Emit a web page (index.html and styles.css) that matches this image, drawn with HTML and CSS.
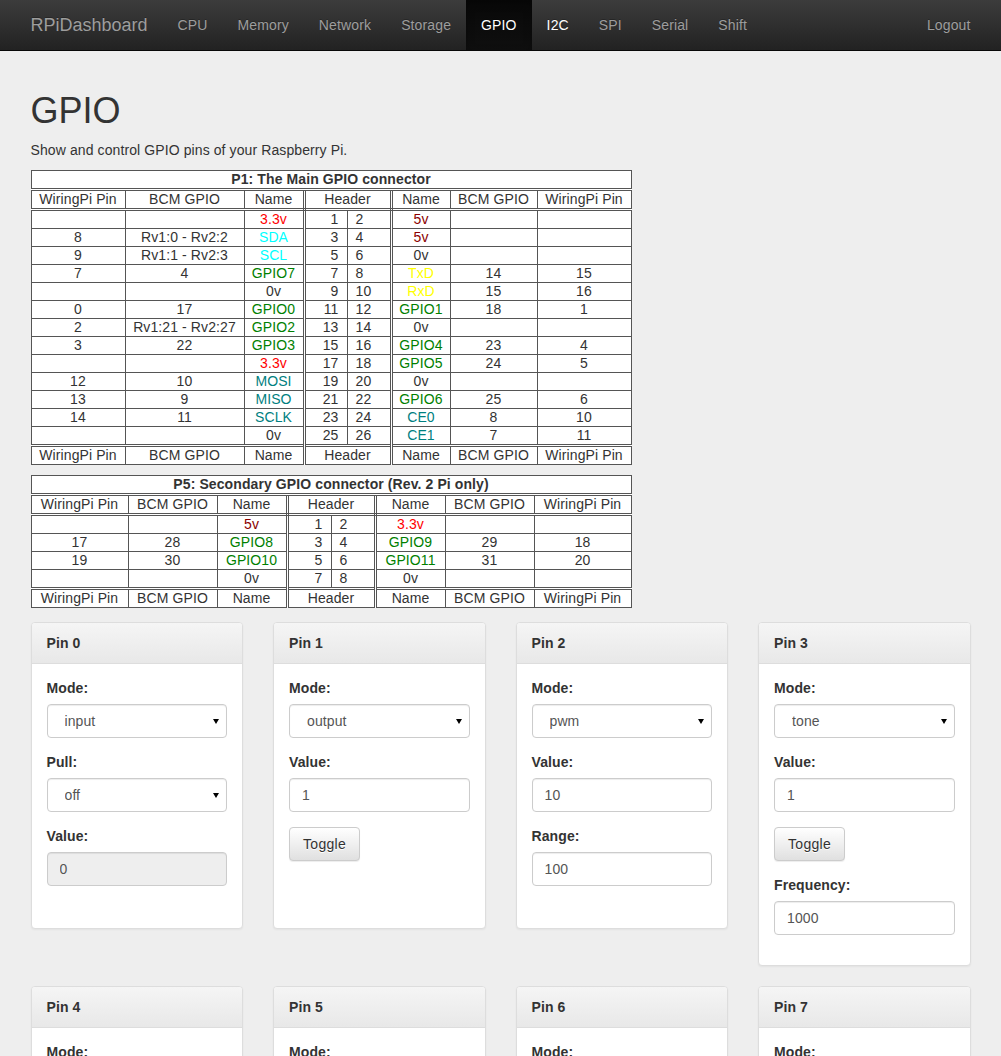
FILE: index.html
```html
<!DOCTYPE html>
<html lang="en">
<head>
<meta charset="utf-8">
<title>RPiDashboard - GPIO</title>
<link rel="stylesheet" href="styles.css">
</head>
<body>
<nav class="navbar">
  <div class="navbar-inner">
    <a class="brand" href="#">RPiDashboard</a>
    <ul class="nav">
      <li><a href="#">CPU</a></li>
      <li><a href="#">Memory</a></li>
      <li><a href="#">Network</a></li>
      <li><a href="#">Storage</a></li>
      <li class="active"><a href="#">GPIO</a></li>
      <li class="hover"><a href="#">I2C</a></li>
      <li><a href="#">SPI</a></li>
      <li><a href="#">Serial</a></li>
      <li><a href="#">Shift</a></li>
    </ul>
    <ul class="nav nav-right">
      <li><a href="#">Logout</a></li>
    </ul>
  </div>
</nav>

<main class="container">
  <h1>GPIO</h1>
  <p class="lead">Show and control GPIO pins of your Raspberry Pi.</p>

  <table class="pins p1">
    <colgroup>
      <col class="p1-a"><col class="p1-b"><col class="p1-c"><col class="p1-d"><col class="p1-e"><col class="p1-f"><col class="p1-g"><col class="p1-h">
    </colgroup>
    <tr class="title"><th colspan="8">P1: The Main GPIO connector</th></tr>
    <tr class="head-row"><th>WiringPi Pin</th><th>BCM GPIO</th><th class="dbl">Name</th><th colspan="2" class="dbl">Header</th><th>Name</th><th>BCM GPIO</th><th>WiringPi Pin</th></tr>
    <tr><td></td><td></td><td class="dbl v33">3.3v</td><td class="hl">1</td><td class="hr dbl">2</td><td class="v5">5v</td><td></td><td></td></tr>
    <tr><td>8</td><td>Rv1:0 - Rv2:2</td><td class="dbl i2c">SDA</td><td class="hl">3</td><td class="hr dbl">4</td><td class="v5">5v</td><td></td><td></td></tr>
    <tr><td>9</td><td>Rv1:1 - Rv2:3</td><td class="dbl i2c">SCL</td><td class="hl">5</td><td class="hr dbl">6</td><td>0v</td><td></td><td></td></tr>
    <tr><td>7</td><td>4</td><td class="dbl gpio">GPIO7</td><td class="hl">7</td><td class="hr dbl">8</td><td class="uart">TxD</td><td>14</td><td>15</td></tr>
    <tr><td></td><td></td><td class="dbl">0v</td><td class="hl">9</td><td class="hr dbl">10</td><td class="uart">RxD</td><td>15</td><td>16</td></tr>
    <tr><td>0</td><td>17</td><td class="dbl gpio">GPIO0</td><td class="hl">11</td><td class="hr dbl">12</td><td class="gpio">GPIO1</td><td>18</td><td>1</td></tr>
    <tr><td>2</td><td>Rv1:21 - Rv2:27</td><td class="dbl gpio">GPIO2</td><td class="hl">13</td><td class="hr dbl">14</td><td>0v</td><td></td><td></td></tr>
    <tr><td>3</td><td>22</td><td class="dbl gpio">GPIO3</td><td class="hl">15</td><td class="hr dbl">16</td><td class="gpio">GPIO4</td><td>23</td><td>4</td></tr>
    <tr><td></td><td></td><td class="dbl v33">3.3v</td><td class="hl">17</td><td class="hr dbl">18</td><td class="gpio">GPIO5</td><td>24</td><td>5</td></tr>
    <tr><td>12</td><td>10</td><td class="dbl spi">MOSI</td><td class="hl">19</td><td class="hr dbl">20</td><td>0v</td><td></td><td></td></tr>
    <tr><td>13</td><td>9</td><td class="dbl spi">MISO</td><td class="hl">21</td><td class="hr dbl">22</td><td class="gpio">GPIO6</td><td>25</td><td>6</td></tr>
    <tr><td>14</td><td>11</td><td class="dbl spi">SCLK</td><td class="hl">23</td><td class="hr dbl">24</td><td class="spi">CE0</td><td>8</td><td>10</td></tr>
    <tr><td></td><td></td><td class="dbl">0v</td><td class="hl">25</td><td class="hr dbl">26</td><td class="spi">CE1</td><td>7</td><td>11</td></tr>
    <tr class="foot-row"><th>WiringPi Pin</th><th>BCM GPIO</th><th class="dbl">Name</th><th colspan="2" class="dbl">Header</th><th>Name</th><th>BCM GPIO</th><th>WiringPi Pin</th></tr>
  </table>

  <table class="pins p5">
    <colgroup>
      <col class="p5-a"><col class="p5-b"><col class="p5-c"><col class="p5-d"><col class="p5-e"><col class="p5-f"><col class="p5-g"><col class="p5-h">
    </colgroup>
    <tr class="title"><th colspan="8">P5: Secondary GPIO connector (Rev. 2 Pi only)</th></tr>
    <tr class="head-row"><th>WiringPi Pin</th><th>BCM GPIO</th><th class="dbl">Name</th><th colspan="2" class="dbl">Header</th><th>Name</th><th>BCM GPIO</th><th>WiringPi Pin</th></tr>
    <tr><td></td><td></td><td class="dbl v5">5v</td><td class="hl">1</td><td class="hr dbl">2</td><td class="v33">3.3v</td><td></td><td></td></tr>
    <tr><td>17</td><td>28</td><td class="dbl gpio">GPIO8</td><td class="hl">3</td><td class="hr dbl">4</td><td class="gpio">GPIO9</td><td>29</td><td>18</td></tr>
    <tr><td>19</td><td>30</td><td class="dbl gpio">GPIO10</td><td class="hl">5</td><td class="hr dbl">6</td><td class="gpio">GPIO11</td><td>31</td><td>20</td></tr>
    <tr><td></td><td></td><td class="dbl">0v</td><td class="hl">7</td><td class="hr dbl">8</td><td>0v</td><td></td><td></td></tr>
    <tr class="foot-row"><th>WiringPi Pin</th><th>BCM GPIO</th><th class="dbl">Name</th><th colspan="2" class="dbl">Header</th><th>Name</th><th>BCM GPIO</th><th>WiringPi Pin</th></tr>
  </table>

  <div class="pin-grid">
    <div class="panel">
      <div class="panel-heading"><h3 class="panel-title">Pin 0</h3></div>
      <div class="panel-body">
        <div class="form-group"><label>Mode:</label><div class="select-wrap"><select class="form-control"><option>input</option><option>output</option><option>pwm</option><option>tone</option></select></div></div>
        <div class="form-group"><label>Pull:</label><div class="select-wrap"><select class="form-control"><option>off</option><option>up</option><option>down</option></select></div></div>
        <div class="form-group"><label>Value:</label><input class="form-control" type="text" value="0" disabled></div>
      </div>
    </div>
    <div class="panel">
      <div class="panel-heading"><h3 class="panel-title">Pin 1</h3></div>
      <div class="panel-body">
        <div class="form-group"><label>Mode:</label><div class="select-wrap"><select class="form-control"><option>output</option></select></div></div>
        <div class="form-group"><label>Value:</label><input class="form-control" type="text" value="1"></div>
        <div class="form-group"><button class="btn" type="button">Toggle</button></div>
      </div>
    </div>
    <div class="panel">
      <div class="panel-heading"><h3 class="panel-title">Pin 2</h3></div>
      <div class="panel-body">
        <div class="form-group"><label>Mode:</label><div class="select-wrap"><select class="form-control"><option>pwm</option></select></div></div>
        <div class="form-group"><label>Value:</label><input class="form-control" type="text" value="10"></div>
        <div class="form-group"><label>Range:</label><input class="form-control" type="text" value="100"></div>
      </div>
    </div>
    <div class="panel">
      <div class="panel-heading"><h3 class="panel-title">Pin 3</h3></div>
      <div class="panel-body">
        <div class="form-group"><label>Mode:</label><div class="select-wrap"><select class="form-control"><option>tone</option></select></div></div>
        <div class="form-group"><label>Value:</label><input class="form-control" type="text" value="1"></div>
        <div class="form-group"><button class="btn" type="button">Toggle</button></div>
        <div class="form-group"><label>Frequency:</label><input class="form-control" type="text" value="1000"></div>
      </div>
    </div>

    <div class="panel">
      <div class="panel-heading"><h3 class="panel-title">Pin 4</h3></div>
      <div class="panel-body">
        <div class="form-group"><label>Mode:</label><div class="select-wrap"><select class="form-control"><option>input</option></select></div></div>
        <div class="form-group"><label>Pull:</label><div class="select-wrap"><select class="form-control"><option>off</option></select></div></div>
        <div class="form-group"><label>Value:</label><input class="form-control" type="text" value="0" disabled></div>
      </div>
    </div>
    <div class="panel">
      <div class="panel-heading"><h3 class="panel-title">Pin 5</h3></div>
      <div class="panel-body">
        <div class="form-group"><label>Mode:</label><div class="select-wrap"><select class="form-control"><option>input</option></select></div></div>
        <div class="form-group"><label>Pull:</label><div class="select-wrap"><select class="form-control"><option>off</option></select></div></div>
        <div class="form-group"><label>Value:</label><input class="form-control" type="text" value="0" disabled></div>
      </div>
    </div>
    <div class="panel">
      <div class="panel-heading"><h3 class="panel-title">Pin 6</h3></div>
      <div class="panel-body">
        <div class="form-group"><label>Mode:</label><div class="select-wrap"><select class="form-control"><option>input</option></select></div></div>
        <div class="form-group"><label>Pull:</label><div class="select-wrap"><select class="form-control"><option>off</option></select></div></div>
        <div class="form-group"><label>Value:</label><input class="form-control" type="text" value="0" disabled></div>
      </div>
    </div>
    <div class="panel">
      <div class="panel-heading"><h3 class="panel-title">Pin 7</h3></div>
      <div class="panel-body">
        <div class="form-group"><label>Mode:</label><div class="select-wrap"><select class="form-control"><option>input</option></select></div></div>
        <div class="form-group"><label>Pull:</label><div class="select-wrap"><select class="form-control"><option>off</option></select></div></div>
        <div class="form-group"><label>Value:</label><input class="form-control" type="text" value="0" disabled></div>
      </div>
    </div>
  </div>
</main>
</body>
</html>
```

FILE: styles.css
```css
* { box-sizing: border-box; }
html, body { margin: 0; padding: 0; }
body {
  background: #eeeeee;
  font-family: "Liberation Sans", Arial, Helvetica, sans-serif;
  font-size: 14px;
  line-height: 1.428571;
  color: #333;
  letter-spacing: 0.1px;
}

/* navbar */
.navbar {
  height: 51px;
  background-image: linear-gradient(to bottom, #3c3c3c 0, #222 100%);
  border-bottom: 1px solid #080808;
}
.navbar-inner {
  width: 970px;
  margin: 0 auto;
  padding: 0 15px;
  display: flex;
}
.brand {
  display: block;
  margin-left: -15px;
  padding: 15px;
  height: 50px;
  font-size: 18px;
  line-height: 20px;
  letter-spacing: 0;
  color: #9d9d9d;
  text-decoration: none;
  text-shadow: 0 -1px 0 rgba(0, 0, 0, .25);
}
.nav {
  display: flex;
  list-style: none;
  margin: 0;
  padding: 0;
}
.nav a {
  display: block;
  padding: 15px;
  height: 50px;
  line-height: 20px;
  letter-spacing: 0.13px;
  color: #9d9d9d;
  text-decoration: none;
  text-shadow: 0 -1px 0 rgba(0, 0, 0, .25);
}
.nav .active a {
  color: #fff;
  background-image: linear-gradient(to bottom, #080808 0, #0f0f0f 100%);
  box-shadow: inset 0 3px 9px rgba(0, 0, 0, .25);
}
.nav .hover a { color: #fff; }
.nav-right {
  margin-left: auto;
  margin-right: -15px;
}

/* content */
.container {
  width: 970px;
  margin: 0 auto;
  padding: 20px 15px 0;
}
h1 {
  margin: 20px 0 10px;
  font-size: 36px;
  font-weight: 500;
  line-height: 1.1;
  letter-spacing: 0;
}
.lead { margin: 0 0 9px; }

/* pin tables */
.pins {
  width: 600px;
  table-layout: fixed;
  border-collapse: collapse;
  background: #fff;
  margin-bottom: 10px;
}
.pins.p5 { margin-bottom: 14px; }
.pins td, .pins th {
  border: 1px solid #555;
  padding: 0;
  line-height: 17px;
  text-align: center;
  font-weight: normal;
  white-space: nowrap;
  overflow: hidden;
}
.pins .title th { font-weight: bold; border-bottom: 3px double #555; }
.pins .head-row th { border-bottom: 3px double #555; }
.pins .foot-row th { border-top: 3px double #555; }
.pins .dbl { border-right: 3px double #555; }
.pins .hl { text-align: right; padding-right: 8px; }
.pins .hr { text-align: left; padding-left: 8px; }

.p1-a { width: 94px; } .p1-b { width: 119px; } .p1-c { width: 60px; } .p1-d { width: 43px; }
.p1-e { width: 44px; } .p1-f { width: 59px; } .p1-g { width: 87px; } .p1-h { width: 94px; }
.p5-a { width: 97px; } .p5-b { width: 89px; } .p5-c { width: 70px; } .p5-d { width: 44px; }
.p5-e { width: 44px; } .p5-f { width: 70px; } .p5-g { width: 89px; } .p5-h { width: 97px; }

.v33 { color: #ff0000; }
.v5 { color: #8b0000; }
.i2c { color: #00ffff; }
.uart { color: #ffff00; }
.gpio { color: #008000; }
.spi { color: #008080; }

/* pin panels */
.pin-grid {
  display: grid;
  grid-template-columns: repeat(4, 1fr);
  column-gap: 30px;
  align-items: start;
}
.panel {
  background: #fff;
  border: 1px solid #ddd;
  border-radius: 4px;
  box-shadow: 0 1px 2px rgba(0, 0, 0, .05);
  margin-bottom: 20px;
  min-height: 307px;
}
.panel-heading {
  padding: 10px 15px;
  border-bottom: 1px solid #ddd;
  border-radius: 3px 3px 0 0;
  background-image: linear-gradient(to bottom, #f5f5f5 0, #e8e8e8 100%);
}
.panel-title {
  margin: 0;
  font-size: 14px;
  font-weight: bold;
  line-height: 20px;
  color: #333;
}
.panel-body { padding: 15px; }
.form-group { margin-bottom: 15px; }
label {
  display: block;
  margin-bottom: 5px;
  font-weight: bold;
}
.form-control {
  display: block;
  width: 100%;
  height: 34px;
  padding: 6px 12px;
  font-family: inherit;
  font-size: 14px;
  line-height: 20px;
  letter-spacing: 0.1px;
  color: #555;
  background: #fff;
  border: 1px solid #ccc;
  border-radius: 4px;
  box-shadow: inset 0 1px 1px rgba(0, 0, 0, .075);
}
.form-control[disabled] { background: #eee; }
select.form-control {
  -webkit-appearance: none;
  appearance: none;
  padding-left: 17px;
}
.select-wrap { position: relative; }
.select-wrap::after {
  content: "";
  position: absolute;
  right: 8px;
  top: 15px;
  border-left: 3px solid transparent;
  border-right: 3px solid transparent;
  border-top: 5px solid #000;
}
.btn {
  display: inline-block;
  padding: 6px 13px;
  font-family: inherit;
  font-size: 14px;
  line-height: 20px;
  letter-spacing: 0.3px;
  color: #333;
  border: 1px solid #ccc;
  border-radius: 4px;
  background-image: linear-gradient(to bottom, #fff 0, #e0e0e0 100%);
  text-shadow: 0 1px 0 #fff;
  box-shadow: inset 0 1px 0 rgba(255, 255, 255, .15), 0 1px 1px rgba(0, 0, 0, .075);
}
```
